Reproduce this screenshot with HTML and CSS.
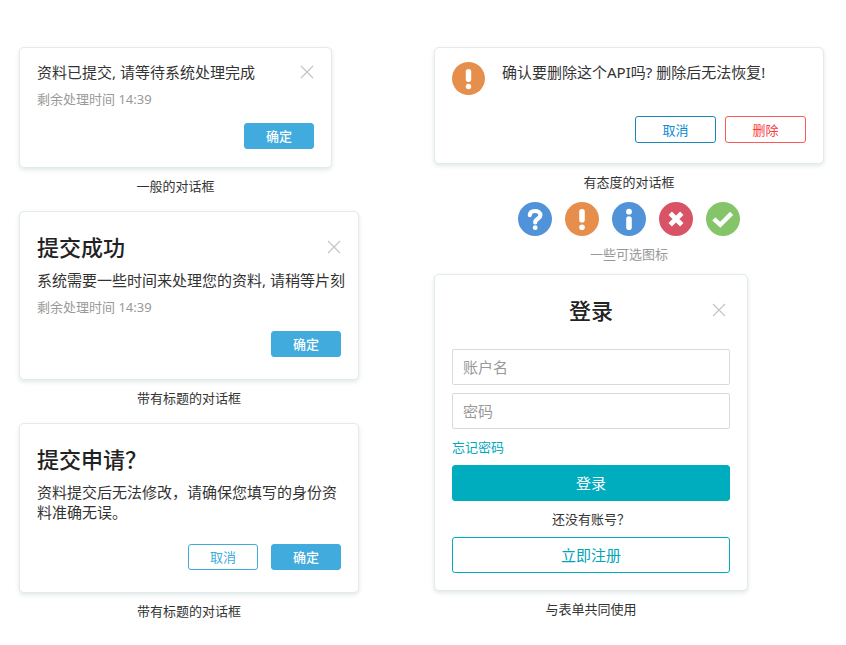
FILE: index.html
```html
<!DOCTYPE html>
<html lang="zh-CN">
<head>
<meta charset="utf-8">
<meta name="viewport" content="width=device-width, initial-scale=1">
<title>对话框</title>
<link rel="stylesheet" href="styles.css">
</head>
<body>
<svg class="sprite" aria-hidden="true">
  <symbol id="close" viewBox="0 0 14 14"><path d="M1 1 13 13M13 1 1 13" fill="none" stroke="currentColor" stroke-width="1.2"/></symbol>
  <symbol id="question" viewBox="0 0 34 34"><circle cx="17" cy="17" r="17" fill="#5193d9"/><path d="M11.800 13.200C12 10.400 14 9 17 9s5.400 1.500 5.400 4.200c0 3.600-5.200 3.500-5.200 7.200" fill="none" stroke="#fff" stroke-width="4.200" stroke-linecap="round"/><circle cx="17.200" cy="25.700" r="2.400" fill="#fff"/></symbol>
  <symbol id="warning" viewBox="0 0 34 34"><circle cx="17" cy="17" r="17" fill="#e68f4d"/><path d="M17 9.900V17.800" stroke="#fff" stroke-width="5.600" stroke-linecap="round"/><circle cx="17" cy="25.200" r="2.800" fill="#fff"/></symbol>
  <symbol id="info" viewBox="0 0 34 34"><circle cx="17" cy="17" r="17" fill="#5193d9"/><circle cx="17" cy="9.700" r="2.900" fill="#fff"/><path d="M17 17V25.300" stroke="#fff" stroke-width="5.600" stroke-linecap="round"/></symbol>
  <symbol id="error" viewBox="0 0 34 34"><circle cx="17" cy="17" r="17" fill="#d95366"/><path d="M11.200 11.200 22.800 22.800M22.800 11.200 11.200 22.800" stroke="#fff" stroke-width="4.800"/></symbol>
  <symbol id="success" viewBox="0 0 34 34"><circle cx="17" cy="17" r="17" fill="#84c56a"/><path d="M7.800 16.800 14.300 22.800 25.600 11.400" fill="none" stroke="#fff" stroke-width="4.400"/></symbol>
</svg>
<main class="board">
  <div class="column column-left">
    <figure class="example">
      <section class="dialog dialog-small">
        <div class="dialog-head">
          <p class="message">资料已提交, 请等待系统处理完成</p>
          <button class="close" type="button" aria-label="关闭"><svg><use href="#close"/></svg></button>
        </div>
        <p class="note">剩余处理时间 14:39</p>
        <div class="actions"><button class="btn btn-primary" type="button">确定</button></div>
      </section>
      <figcaption class="caption">一般的对话框</figcaption>
    </figure>
    <figure class="example">
      <section class="dialog dialog-titled">
        <div class="dialog-head">
          <h2 class="title">提交成功</h2>
          <button class="close" type="button" aria-label="关闭"><svg><use href="#close"/></svg></button>
        </div>
        <p class="message message-line">系统需要一些时间来处理您的资料, 请稍等片刻</p>
        <p class="note">剩余处理时间 14:39</p>
        <div class="actions"><button class="btn btn-primary" type="button">确定</button></div>
      </section>
      <figcaption class="caption">带有标题的对话框</figcaption>
    </figure>
    <figure class="example">
      <section class="dialog dialog-titled">
        <div class="dialog-head"><h2 class="title">提交申请？</h2></div>
        <p class="message">资料提交后无法修改，请确保您填写的身份资料准确无误。</p>
        <div class="actions actions-far">
          <button class="btn btn-outline" type="button">取消</button>
          <button class="btn btn-primary" type="button">确定</button>
        </div>
      </section>
      <figcaption class="caption">带有标题的对话框</figcaption>
    </figure>
  </div>
  <div class="column column-right">
    <figure class="example">
      <section class="dialog">
        <div class="alert">
          <svg class="alert-icon"><use href="#warning"/></svg>
          <p class="message">确认要删除这个API吗? 删除后无法恢复!</p>
        </div>
        <div class="actions actions-alert">
          <button class="btn btn-wide btn-cancel" type="button">取消</button>
          <button class="btn btn-wide btn-danger" type="button">删除</button>
        </div>
      </section>
      <figcaption class="caption">有态度的对话框</figcaption>
    </figure>
    <figure class="example">
      <div class="icons">
        <svg><use href="#question"/></svg>
        <svg><use href="#warning"/></svg>
        <svg><use href="#info"/></svg>
        <svg><use href="#error"/></svg>
        <svg><use href="#success"/></svg>
      </div>
      <figcaption class="caption caption-muted">一些可选图标</figcaption>
    </figure>
    <figure class="example">
      <section class="dialog dialog-titled dialog-login">
        <div class="login-head">
          <h2 class="title">登录</h2>
          <button class="close" type="button" aria-label="关闭"><svg><use href="#close"/></svg></button>
        </div>
        <form class="login">
          <input class="field" type="text" placeholder="账户名" aria-label="账户名">
          <input class="field" type="password" placeholder="密码" aria-label="密码">
          <a class="forgot" href="#">忘记密码</a>
          <button class="submit" type="button">登录</button>
          <p class="hint">还没有账号？</p>
          <button class="submit submit-outline" type="button">立即注册</button>
        </form>
      </section>
      <figcaption class="caption">与表单共同使用</figcaption>
    </figure>
  </div>
</main>
</body>
</html>
```
FILE: styles.css
```css
* { box-sizing: border-box; }

body {
  margin: 0;
  background: #fff;
  color: #333;
  font: 13px/20px "Noto Sans", "Noto Sans CJK SC", sans-serif;
}

p, h2, figure { margin: 0; }
button, input { font: inherit; }
button { cursor: pointer; }
.sprite { display: none; }

.board {
  display: grid;
  grid-template-columns: minmax(0, 340fr) minmax(0, 390fr);
  gap: 75px;
  padding: 47px 22px 24px 19px;
}

.column { display: flex; flex-direction: column; }
.column-left { gap: 15px; }
.column-right { gap: 10px; }
.column-right .example:last-child { max-width: 314px; }
.dialog-small + .caption { max-width: 313px; }

.dialog {
  padding: 14px 17px 18px;
  border: 1px solid #e4e9e9;
  border-radius: 5px;
  background: #fff;
  box-shadow: 0 2px 4px rgba(60, 110, 110, 0.16);
}
.dialog-small { max-width: 313px; }
.dialog-titled { padding-top: 20px; padding-bottom: 22px; }
.dialog-login { padding-bottom: 17px; }

.dialog-head {
  display: flex;
  align-items: center;
  justify-content: space-between;
}

.title {
  font-size: 22px;
  line-height: 30px;
  font-weight: 500;
  color: #222;
}
.dialog-head:has(.title) { margin-bottom: 8px; }

.message { font-size: 15px; line-height: 20px; }
.message-line { white-space: nowrap; }
.note { margin-top: 7px; color: #999; }

.close {
  display: flex;
  padding: 0;
  border: 0;
  background: none;
  color: #c4c4c4;
}
.close svg { width: 14px; height: 14px; }

.actions {
  display: flex;
  justify-content: flex-end;
  gap: 13px;
  margin-top: 14px;
}
.actions-far { margin-top: 22px; }
.actions-alert { gap: 9px; margin: 21px 0 2px; }

.btn {
  width: 70px;
  height: 26px;
  padding: 0;
  border: 1px solid #40abdc;
  border-radius: 3px;
  background: #fff;
  line-height: 20px;
}
.btn-primary { background: #40abdc; color: #fff; font-weight: 500; }
.btn-outline { color: #40abdc; }
.btn-wide { width: 81px; height: 27px; }
.btn-cancel { border-color: #1c87bf; color: #0d8ad0; }
.btn-danger { border-color: #fa5a5a; color: #fa3c3c; }

.alert { display: flex; gap: 17px; }
.alert-icon { flex: none; width: 33px; height: 33px; }

.caption { margin-top: 8px; text-align: center; }
.caption-muted { color: #999; }

.icons { display: flex; justify-content: center; gap: 13px; }
.icons svg { width: 34px; height: 34px; }

.login-head {
  display: grid;
  grid-template-columns: 1fr auto 1fr;
  align-items: center;
  padding: 0 4px;
  margin-bottom: 24px;
}
.login-head .title { grid-column: 2; }
.login-head .close { justify-self: end; }

.login { display: flex; flex-direction: column; gap: 8px; }

.field {
  width: 100%;
  height: 36px;
  padding: 0 10px;
  border: 1px solid #d9d9d9;
  border-radius: 2px;
  font-size: 15px;
  color: #333;
}
.field::placeholder { color: #999; opacity: 1; }

.forgot { align-self: flex-start; color: #00a9bd; text-decoration: none; }

.submit {
  height: 36px;
  padding: 0;
  border: 1px solid #00adbf;
  border-radius: 3px;
  background: #00adbf;
  color: #fff;
  font-size: 15px;
}
.submit-outline { background: #fff; color: #00a5b8; }
.hint { text-align: center; }
```
